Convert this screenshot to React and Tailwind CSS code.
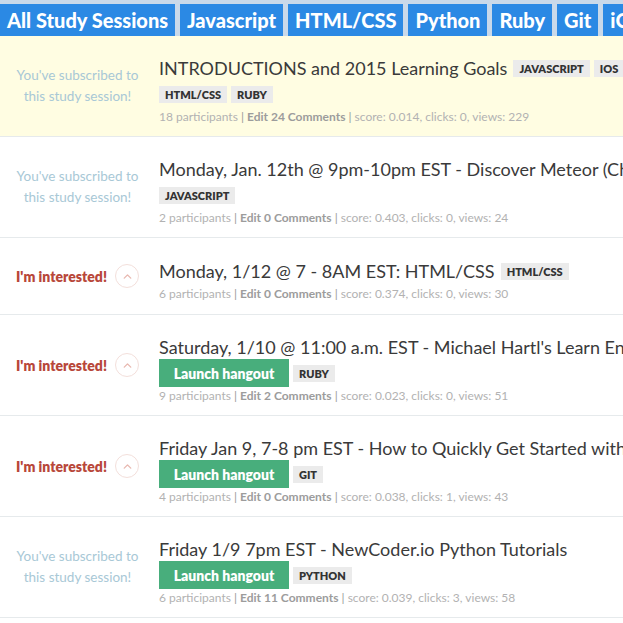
import React from 'react';
import { ChevronUp } from 'lucide-react';

const TABS = ['All Study Sessions', 'Javascript', 'HTML/CSS', 'Python', 'Ruby', 'Git', 'iOS'];

const SESSIONS = [
  {
    title: 'INTRODUCTIONS and 2015 Learning Goals',
    inlineTags: ['Javascript', 'iOS'],
    tags: ['HTML/CSS', 'Ruby'],
    subscribed: true,
    highlight: true,
    participants: 18, comments: 24, score: '0.014', clicks: 0, views: 229,
  },
  {
    title: 'Monday, Jan. 12th @ 9pm-10pm EST - Discover Meteor (Chapters 1-3)',
    tags: ['Javascript'],
    subscribed: true,
    participants: 2, comments: 0, score: '0.403', clicks: 0, views: 24,
  },
  {
    title: 'Monday, 1/12 @ 7 - 8AM EST: HTML/CSS',
    inlineTags: ['HTML/CSS'],
    participants: 6, comments: 0, score: '0.374', clicks: 0, views: 30,
  },
  {
    title: "Saturday, 1/10 @ 11:00 a.m. EST - Michael Hartl's Learn Enough to Be Dangerous",
    hangout: true,
    tags: ['Ruby'],
    participants: 9, comments: 2, score: '0.023', clicks: 0, views: 51,
  },
  {
    title: 'Friday Jan 9, 7-8 pm EST - How to Quickly Get Started with Git',
    hangout: true,
    tags: ['Git'],
    participants: 4, comments: 0, score: '0.038', clicks: 1, views: 43,
  },
  {
    title: 'Friday 1/9 7pm EST - NewCoder.io Python Tutorials',
    hangout: true,
    tags: ['Python'],
    subscribed: true,
    participants: 6, comments: 11, score: '0.039', clicks: 3, views: 58,
  },
];

function Tag({ label }) {
  return (
    <span className="inline-flex items-center shrink-0 h-[17px] px-[6px] bg-[#ebebeb] text-[#333] text-[11px] font-extrabold uppercase leading-none">
      {label}
    </span>
  );
}

function Interest({ subscribed }) {
  if (subscribed) {
    return (
      <p className="text-center text-[13.5px] leading-[21px] text-[#a8c8d6]">
        You've subscribed to
        <br />
        this study session!
      </p>
    );
  }
  return (
    <div className="flex items-center gap-[8px]">
      <span className="text-[14px] font-extrabold text-[#b8473a]">I'm interested!</span>
      <span className="h-[24px] w-[24px] rounded-full border border-[#f3dfdb] flex items-center justify-center">
        <ChevronUp className="h-[13px] w-[13px] text-[#e8b8b0]" strokeWidth={2.5} />
      </span>
    </div>
  );
}

function SessionRow({ s }) {
  const compact = !s.tags && !s.hangout;
  return (
    <div className={`flex border-b border-[#e6eaec] ${s.highlight ? 'bg-[#fffde2]' : 'bg-white'}`}>
      <div className="w-[155px] shrink-0 flex items-center justify-center">
        <Interest subscribed={s.subscribed} />
      </div>
      <div className={`ml-[4px] pt-[20px] ${compact ? 'pb-[11px]' : 'pb-[10px]'} min-w-0`}>
        <div className={`flex items-center gap-[4px] whitespace-nowrap ${compact ? 'h-[27px]' : 'h-[24px]'}`}>
          <span className="text-[18px] text-[#3a3a3a] mr-[2px]">{s.title}</span>
          {s.inlineTags && s.inlineTags.map((t) => <Tag key={t} label={t} />)}
        </div>
        {!compact && (
          <div className="flex items-center gap-[4px] h-[28px]">
            {s.hangout && (
              <span className="h-[28px] w-[130px] bg-[#48ae7c] text-white text-[14px] font-extrabold flex items-center justify-center">
                Launch hangout
              </span>
            )}
            {s.tags.map((t) => <Tag key={t} label={t} />)}
          </div>
        )}
        <p className="h-[18px] leading-[18px] text-[12px] text-[#b2b2b2] whitespace-nowrap">
          {s.participants} participants <span className="text-[#999]">|</span>{' '}
          <span className="font-bold text-[#9c9c9c]">Edit {s.comments} Comments</span>{' '}
          <span className="text-[#999]">|</span> score: {s.score}, clicks: {s.clicks}, views: {s.views}
        </p>
      </div>
    </div>
  );
}

export default function App() {
  return (
    <div className="w-[623px] h-[623px] overflow-hidden bg-white font-['Lato',sans-serif]">
      <div className="bg-[#c9d9ea] pt-[4px] flex gap-[5px] whitespace-nowrap">
        {TABS.map((t) => (
          <span key={t} className="h-[32px] px-[7px] bg-[#2b89e4] text-white text-[20px] font-black flex items-center shrink-0">
            {t}
          </span>
        ))}
      </div>
      {SESSIONS.map((s) => (
        <SessionRow key={s.title} s={s} />
      ))}
    </div>
  );
}
